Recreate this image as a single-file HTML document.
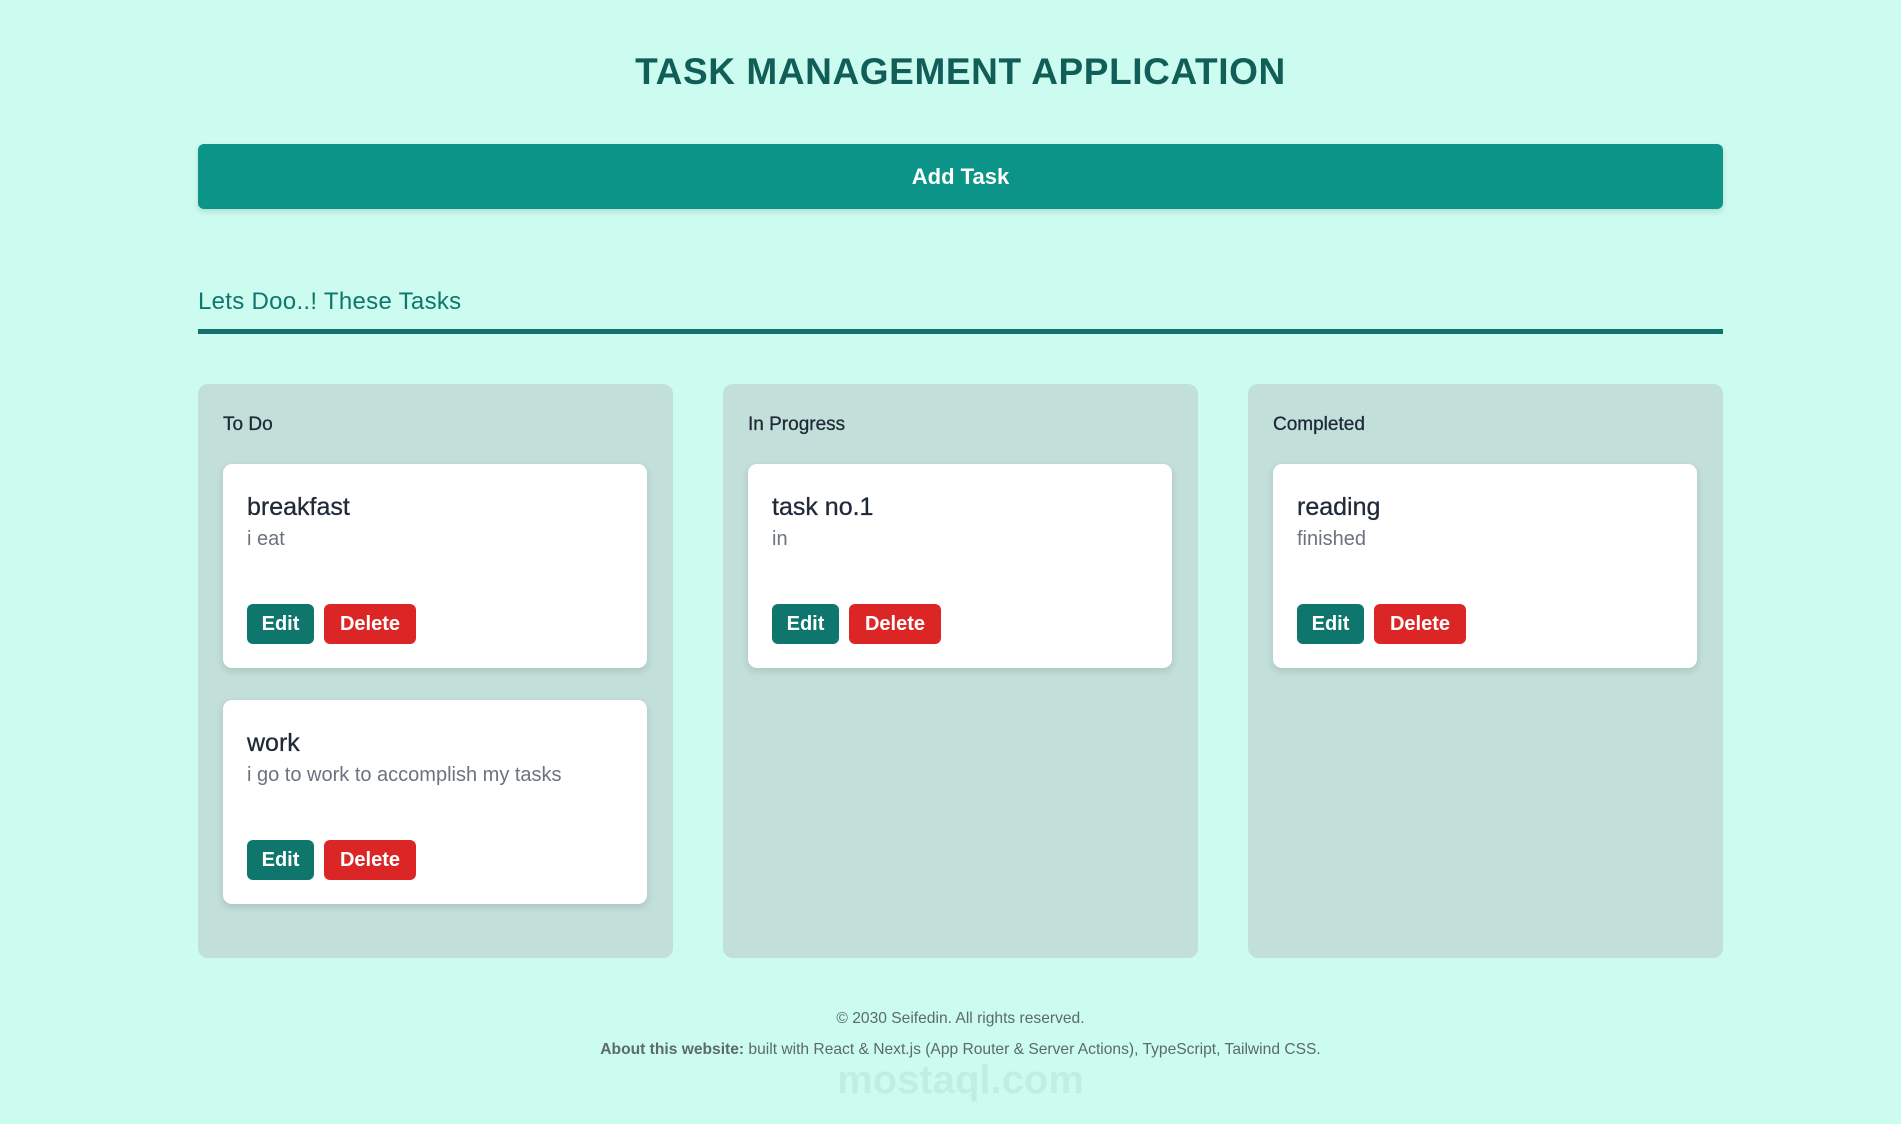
<!DOCTYPE html>
<html><head><meta charset="utf-8"><style>
*{box-sizing:border-box;margin:0;padding:0}
body{width:1901px;height:1124px;background:#ccfbef;font-family:"Liberation Sans",sans-serif;position:relative;overflow:hidden}
h1{position:absolute;top:51px;left:10px;width:1901px;text-align:center;font-size:37px;font-weight:bold;color:#115e59;letter-spacing:0.6px}
.add{position:absolute;left:198px;top:144px;width:1525px;height:65px;background:#0d9488;border-radius:6px;color:#fff;font-size:22px;font-weight:bold;display:flex;align-items:center;justify-content:center;box-shadow:0 3px 6px rgba(0,0,0,.12)}
.sub{position:absolute;left:198px;top:288px;font-size:24px;color:#0f766e;letter-spacing:0.3px}
.line{position:absolute;left:198px;top:329px;width:1525px;height:5px;background:#13706a}
.col{position:absolute;top:384px;width:475px;height:574px;background:#c3dfd9;border-radius:10px}
.col h2{position:absolute;left:25px;top:30px;font-size:19px;font-weight:normal;color:#1f2937;-webkit-text-stroke:.3px #1f2937}
.card{position:absolute;left:25px;width:424px;height:204px;background:#fff;border-radius:9px;box-shadow:0 3px 8px rgba(0,0,0,.13)}
.card .t{position:absolute;left:24px;top:29px;font-size:25px;color:#1f2937;-webkit-text-stroke:.3px #1f2937}
.card .d{position:absolute;left:24px;top:64px;font-size:20px;color:#6b7280}
.btn{position:absolute;top:140px;height:40px;border-radius:6px;color:#fff;font-size:20px;font-weight:bold;display:flex;align-items:center;justify-content:center}
.e{left:24px;width:67px;background:#0f766e}
.x{left:101px;width:92px;background:#dc2626}
.f1{position:absolute;top:1010px;left:10px;width:1901px;text-align:center;font-size:15.6px;color:#5b6b67}
.f2{position:absolute;top:1041px;left:10px;width:1901px;text-align:center;font-size:15.6px;color:#5b6b67}
.wm{position:absolute;top:1058px;left:10px;width:1901px;text-align:center;font-size:40px;font-weight:bold;color:rgba(0,0,0,.05)}
</style></head><body>
<h1>TASK MANAGEMENT APPLICATION</h1>
<div class="add">Add Task</div>
<div class="sub">Lets Doo..! These Tasks</div>
<div class="line"></div>

<div class="col" style="left:198px"><h2>To Do</h2>
<div class="card" style="top:80px"><div class="t">breakfast</div><div class="d">i eat</div><div class="btn e">Edit</div><div class="btn x">Delete</div></div>
<div class="card" style="top:316px"><div class="t">work</div><div class="d">i go to work to accomplish my tasks</div><div class="btn e">Edit</div><div class="btn x">Delete</div></div>
</div>
<div class="col" style="left:723px"><h2>In Progress</h2>
<div class="card" style="top:80px"><div class="t">task no.1</div><div class="d">in</div><div class="btn e">Edit</div><div class="btn x">Delete</div></div>
</div>
<div class="col" style="left:1248px"><h2>Completed</h2>
<div class="card" style="top:80px"><div class="t">reading</div><div class="d">finished</div><div class="btn e">Edit</div><div class="btn x">Delete</div></div>
</div>

<div class="wm">mostaql.com</div>
<div class="f1">© 2030 Seifedin. All rights reserved.</div>
<div class="f2"><b>About this website:</b> built with React &amp; Next.js (App Router &amp; Server Actions), TypeScript, Tailwind CSS.</div>
</body></html>
